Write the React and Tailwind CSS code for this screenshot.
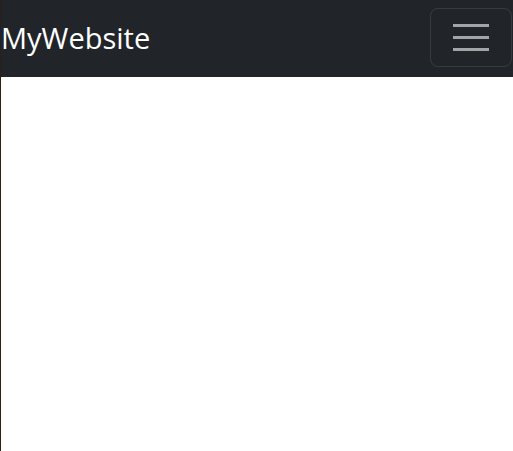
export default function App() {
  return (
    <div className="min-h-[451px] bg-white border-l border-[#2b1f19]" style={{ fontFamily: '"Open Sans", "Noto Sans", sans-serif' }}>
      <nav className="h-[77px] bg-[#212529] flex items-center justify-between pr-[1px]">
        <span className="text-white text-[29px] leading-none tracking-[0px] mb-[2px]">MyWebsite</span>
        <button className="w-[82px] h-[59px] mb-[2px] rounded-lg border border-white/10 flex flex-col items-center justify-center gap-[9px]">
          <span className="block w-[36px] h-[3px] bg-[#a3a4a6]" />
          <span className="block w-[36px] h-[3px] bg-[#a3a4a6]" />
          <span className="block w-[36px] h-[3px] bg-[#a3a4a6]" />
        </button>
      </nav>
    </div>
  );
}
